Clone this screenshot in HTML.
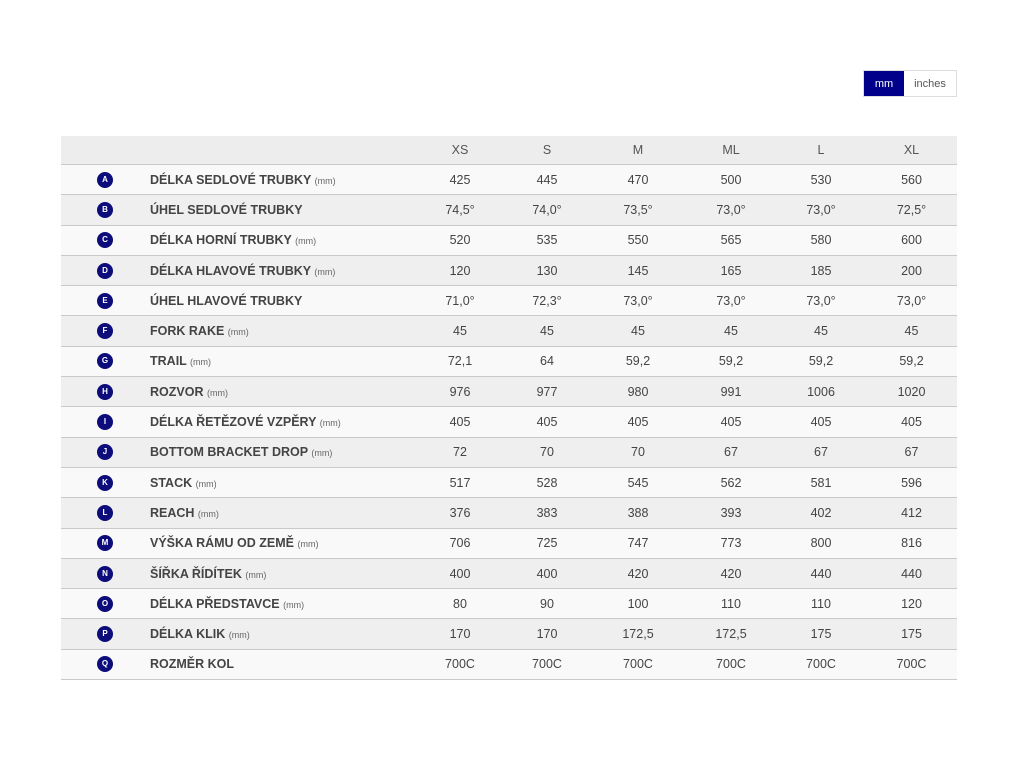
<!DOCTYPE html>
<html><head><meta charset="utf-8"><style>
body{margin:0;background:#fff;font-family:"Liberation Sans",sans-serif;width:1024px;height:768px;position:relative;overflow:hidden}
.tog{position:absolute;left:863px;top:70px;height:27px;width:94px;border:1px solid #ddd;box-sizing:border-box;display:flex;font-size:11px}
.tog div{display:flex;align-items:center;justify-content:center}
.mm{background:#00008b;color:#fff;width:40px}
.in{color:#555;flex:1}
table{position:absolute;left:61px;top:136px;width:896px;border-collapse:collapse;table-layout:fixed;font-size:12.5px;color:#444}
td{height:29.3px;padding:0;border-bottom:1px solid #c9c9c9;text-align:center}
tr.h td{background:#ededed;height:28px;font-size:12.5px;color:#555}
tr:nth-child(even) td{background:#f9f9f9}
tr:nth-child(odd):not(.h) td{background:#efefef}
td.l{text-align:left;font-weight:bold;color:#444;font-size:12.5px;padding-left:1px}
td.l small{font-weight:normal;font-size:9px;color:#666}
.c{display:inline-block;width:16px;height:16px;border-radius:50%;background:#0c0c7a;color:#fff;font-size:8px;font-weight:bold;line-height:16px;text-align:center;vertical-align:middle}
</style></head><body>
<div class="tog"><div class="mm">mm</div><div class="in">inches</div></div>
<table>
<colgroup><col style="width:88px"><col style="width:267px"><col style="width:88px"><col style="width:86px"><col style="width:96px"><col style="width:90px"><col style="width:90px"><col style="width:91px"></colgroup>
<tr class="h"><td></td><td></td><td>XS</td><td>S</td><td>M</td><td>ML</td><td>L</td><td>XL</td></tr>
<tr><td><span class="c">A</span></td><td class="l">DÉLKA SEDLOVÉ TRUBKY <small>(mm)</small></td><td>425</td><td>445</td><td>470</td><td>500</td><td>530</td><td>560</td></tr>
<tr><td><span class="c">B</span></td><td class="l">ÚHEL SEDLOVÉ TRUBKY</td><td>74,5°</td><td>74,0°</td><td>73,5°</td><td>73,0°</td><td>73,0°</td><td>72,5°</td></tr>
<tr><td><span class="c">C</span></td><td class="l">DÉLKA HORNÍ TRUBKY <small>(mm)</small></td><td>520</td><td>535</td><td>550</td><td>565</td><td>580</td><td>600</td></tr>
<tr><td><span class="c">D</span></td><td class="l">DÉLKA HLAVOVÉ TRUBKY <small>(mm)</small></td><td>120</td><td>130</td><td>145</td><td>165</td><td>185</td><td>200</td></tr>
<tr><td><span class="c">E</span></td><td class="l">ÚHEL HLAVOVÉ TRUBKY</td><td>71,0°</td><td>72,3°</td><td>73,0°</td><td>73,0°</td><td>73,0°</td><td>73,0°</td></tr>
<tr><td><span class="c">F</span></td><td class="l">FORK RAKE <small>(mm)</small></td><td>45</td><td>45</td><td>45</td><td>45</td><td>45</td><td>45</td></tr>
<tr><td><span class="c">G</span></td><td class="l">TRAIL <small>(mm)</small></td><td>72,1</td><td>64</td><td>59,2</td><td>59,2</td><td>59,2</td><td>59,2</td></tr>
<tr><td><span class="c">H</span></td><td class="l">ROZVOR <small>(mm)</small></td><td>976</td><td>977</td><td>980</td><td>991</td><td>1006</td><td>1020</td></tr>
<tr><td><span class="c">I</span></td><td class="l">DÉLKA ŘETĚZOVÉ VZPĚRY <small>(mm)</small></td><td>405</td><td>405</td><td>405</td><td>405</td><td>405</td><td>405</td></tr>
<tr><td><span class="c">J</span></td><td class="l">BOTTOM BRACKET DROP <small>(mm)</small></td><td>72</td><td>70</td><td>70</td><td>67</td><td>67</td><td>67</td></tr>
<tr><td><span class="c">K</span></td><td class="l">STACK <small>(mm)</small></td><td>517</td><td>528</td><td>545</td><td>562</td><td>581</td><td>596</td></tr>
<tr><td><span class="c">L</span></td><td class="l">REACH <small>(mm)</small></td><td>376</td><td>383</td><td>388</td><td>393</td><td>402</td><td>412</td></tr>
<tr><td><span class="c">M</span></td><td class="l">VÝŠKA RÁMU OD ZEMĚ <small>(mm)</small></td><td>706</td><td>725</td><td>747</td><td>773</td><td>800</td><td>816</td></tr>
<tr><td><span class="c">N</span></td><td class="l">ŠÍŘKA ŘÍDÍTEK <small>(mm)</small></td><td>400</td><td>400</td><td>420</td><td>420</td><td>440</td><td>440</td></tr>
<tr><td><span class="c">O</span></td><td class="l">DÉLKA PŘEDSTAVCE <small>(mm)</small></td><td>80</td><td>90</td><td>100</td><td>110</td><td>110</td><td>120</td></tr>
<tr><td><span class="c">P</span></td><td class="l">DÉLKA KLIK <small>(mm)</small></td><td>170</td><td>170</td><td>172,5</td><td>172,5</td><td>175</td><td>175</td></tr>
<tr><td><span class="c">Q</span></td><td class="l">ROZMĚR KOL</td><td>700C</td><td>700C</td><td>700C</td><td>700C</td><td>700C</td><td>700C</td></tr>
</table>
</body></html>
